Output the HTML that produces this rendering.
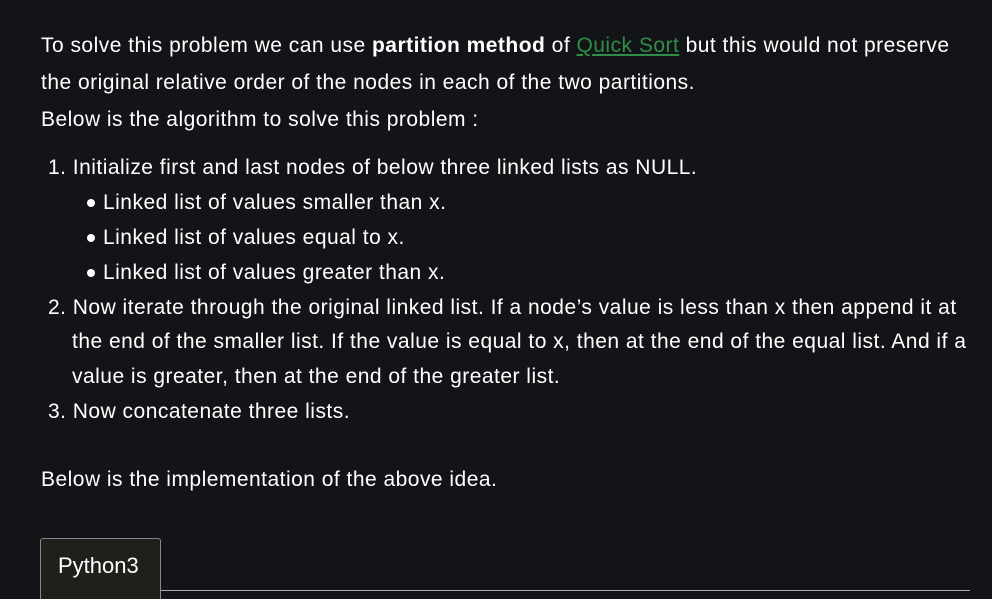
<!DOCTYPE html>
<html><head><style>
html,body{margin:0;padding:0;background:#131417;width:992px;height:595px;overflow:hidden}
body{font-family:"Liberation Sans",sans-serif;color:#fff;font-size:21px;letter-spacing:0.48px}
.p{position:absolute;left:41px;white-space:nowrap;line-height:37px}
a{color:#2f8d46;text-decoration:underline}
.l{position:absolute;white-space:nowrap;line-height:35px}
.tab{position:absolute;left:40px;top:538px;width:119px;height:60px;background:#1f1f1c;border:1px solid #888;border-bottom:none;border-radius:3px 3px 0 0}
.tab span{position:absolute;left:17px;top:14px;font-size:22px;letter-spacing:0}
.line{position:absolute;left:161px;top:590px;width:809px;height:1px;background:#aaa}
.b{position:absolute;width:8px;height:8px;border-radius:50%;background:#fff}
</style></head><body>
<div class="p" style="top:27px">To solve this problem we can use <b>partition method</b> of <a>Quick Sort</a> but this would not preserve</div>
<div class="p" style="top:64px">the original relative order of the nodes in each of the two partitions.</div>
<div class="p" style="top:101px">Below is the algorithm to solve this problem :</div>
<div class="l" style="left:48px;top:150px">1. Initialize first and last nodes of below three linked lists as NULL.</div>
<div class="b" style="left:87px;top:199px"></div><div class="l" style="left:103px;top:185px">Linked list of values smaller than x.</div>
<div class="b" style="left:87px;top:234px"></div><div class="l" style="left:103px;top:220px">Linked list of values equal to x.</div>
<div class="b" style="left:87px;top:269px"></div><div class="l" style="left:103px;top:255px">Linked list of values greater than x.</div>
<div class="l" style="left:48px;top:290px">2. Now iterate through the original linked list. If a node’s value is less than x then append it at</div>
<div class="l" style="left:72px;top:324px">the end of the smaller list. If the value is equal to x, then at the end of the equal list. And if a</div>
<div class="l" style="left:72px;top:359px">value is greater, then at the end of the greater list.</div>
<div class="l" style="left:48px;top:394px">3. Now concatenate three lists.</div>
<div class="p" style="top:461px">Below is the implementation of the above idea.</div>
<div class="tab"><span>Python3</span></div>
<div class="line"></div>
</body></html>
